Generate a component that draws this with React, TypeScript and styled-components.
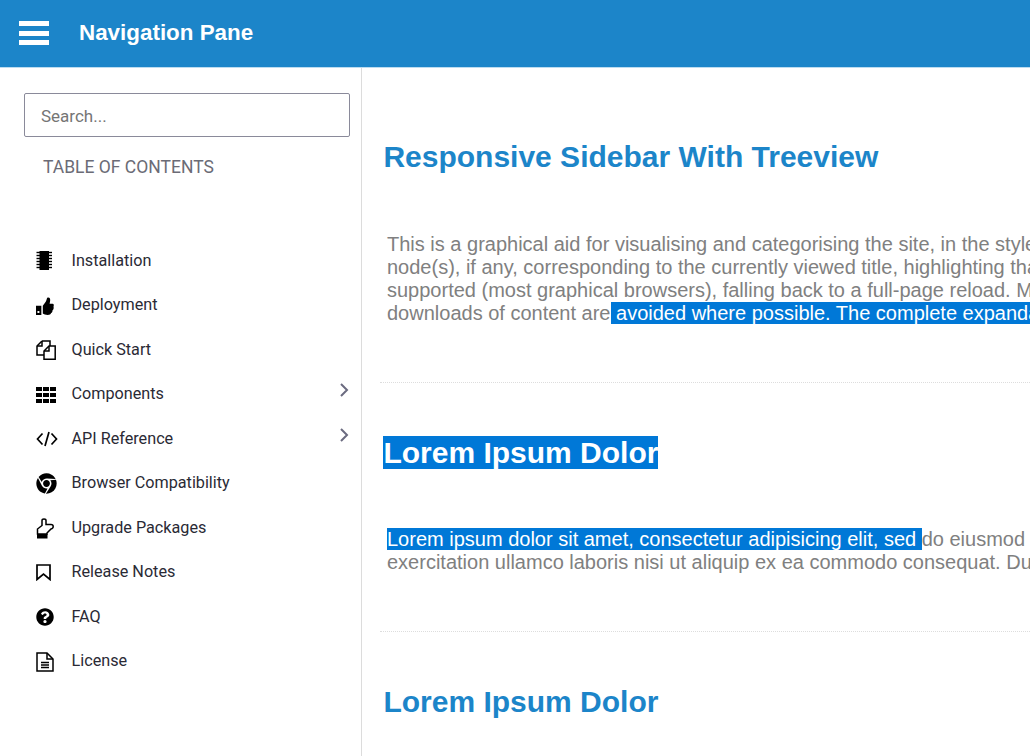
import React from "react";
import styled, { createGlobalStyle } from "styled-components";
import { FaChrome, FaQuestionCircle } from "react-icons/fa";

const Global = createGlobalStyle`
  html, body { margin: 0; padding: 0; background: #fff; overflow: hidden; height: 756px; }
  * { box-sizing: border-box; }
`;

const Page = styled.div`
  width: 1030px;
  height: 756px;
  display: flex;
  flex-direction: column;
  overflow: hidden;
`;

const TopBar = styled.header`
  height: 68px;
  flex: none;
  background: #1c85c9;
  border-bottom: 1px solid #bcdcf0;
  display: flex;
  align-items: center;
  padding-left: 19px;
  gap: 30px;
`;

const Burger = styled.div`
  width: 30px;
  height: 24px;
  display: flex;
  flex-direction: column;
  justify-content: space-between;
  margin-top: -1px;
`;

const BurgerLine = styled.span`
  display: block;
  height: 5px;
  background: #fff;
`;

const Brand = styled.div`
  font: bold 22.4px "Liberation Sans", Arial, sans-serif;
  color: #fff;
  margin-top: -1px;
`;

const Body = styled.div`
  flex: 1;
  display: flex;
  min-height: 0;
`;

const Sidebar = styled.aside`
  width: 362px;
  flex: none;
  border-right: 1px solid #dcdcdc;
  padding: 25px 11px 0 24px;
  font-family: Roboto, sans-serif;
`;

const Search = styled.input`
  display: block;
  width: 326px;
  height: 44px;
  border: 1px solid #8a8a9a;
  border-radius: 2px;
  padding: 1px 16px 0;
  font: 17px Roboto, sans-serif;
  outline: none;
  &::placeholder { color: #757575; opacity: 1; }
`;

const TocTitle = styled.div`
  margin: 20px 0 0 19px;
  font-size: 17.5px;
  line-height: 21px;
  color: #6b6b76;
`;

const Tree = styled.ul`
  list-style: none;
  margin: 60px 0 0;
  padding: 0;
`;

const TreeItem = styled.li`
  height: 44.5px;
  display: flex;
  align-items: center;
  color: #2a2a35;
  font-size: 16.2px;
`;

const IconSlot = styled.span`
  width: 47.5px;
  padding: 2px 0 0 12px;
  flex: none;
  display: flex;
  align-items: center;
  color: #000;
`;

const Label = styled.span`
  flex: 1;
`;

const Caret = styled.svg`
  display: block;
  width: 10px;
  height: 14px;
  margin: -7px 1px 0 0;
  fill: none;
  stroke: #6b6b80;
  stroke-width: 2;
`;

const Main = styled.main`
  flex: 1;
  min-width: 0;
  overflow: hidden;
  padding: 0 0 0 18px;
`;

const Section = styled.section<{ $top: number }>`
  padding-top: ${(p) => p.$top}px;
  border-bottom: 1px dotted #dddddd;
  &:last-child { border-bottom: 0; }
`;

const Heading = styled.h2`
  margin: 0 0 0 3.4px;
  font: bold 30px/34px "Liberation Sans", Arial, sans-serif;
  color: #1c85c9;
  white-space: nowrap;
`;

const Paragraph = styled.p<{ $top: number; $bottom: number }>`
  margin: 0;
  padding: ${(p) => `${p.$top}px 0 ${p.$bottom}px 7px`};
  font: 20px/23px "Liberation Sans", Arial, sans-serif;
  color: #808080;
  white-space: nowrap;
`;

const Selected = styled.span`
  background: #0078d7;
  color: #fff;
`;

function ChipIcon() {
  const ys = [1.5, 4.5, 7.5, 10.5, 13.5, 16.5];
  return (
    <svg width="16" height="19" viewBox="0 0 16 19" style={{ marginTop: -2 }}>
      <rect x="3.5" y="0" width="9.5" height="19" fill="#000" />
      {ys.map((y) => (
        <path key={y} d={`M0.5 ${y}H16`} stroke="#000" strokeWidth="1.4" />
      ))}
    </svg>
  );
}

function ThumbIcon() {
  return (
    <svg width="18" height="18" viewBox="0 0 18.5 18.5">
      <path fillRule="evenodd" d="M0 9h5.5v9.5H0zM1.5 14.5v2h2v-2z" fill="#000" />
      <path d="M7 9 L10 5 C11 3 11 1 12 0.5 C14 0 15 2 14.5 4 L14 7 H17 C18.5 7 18.5 9 18 10 C18.5 11.5 18 13 17 13.5 C17 15 16.5 16 15.5 16.5 C15 18 14 18.5 12 18.5 C10 18.5 8 17.5 7 17 Z" fill="#000" />
    </svg>
  );
}

function CopyIcon() {
  return (
    <svg width="20" height="20" viewBox="0 0 20 20" fill="none" stroke="#000" strokeWidth="1.5">
      <path d="M6 1H14V6M6 1 1 6V15H8" />
      <path d="M1 6H6V1" />
      <path d="M13 6H19.2V19.2H8V11Z" fill="#fff" />
      <path d="M13 6V11H8" />
    </svg>
  );
}

function GridIcon() {
  const xs = [0, 7, 14];
  const ys = [0, 6, 12];
  return (
    <svg width="20" height="16" viewBox="0 0 20 16">
      {ys.map((y) =>
        xs.map((x) => <rect key={`${x}-${y}`} x={x} y={y} width="6" height="4" fill="#000" />)
      )}
    </svg>
  );
}

function CodeIcon() {
  return (
    <svg width="22" height="20" viewBox="0 0 22 20" fill="none" stroke="#000" strokeWidth="1.7">
      <path d="M6.5 4.5 1.5 10l5 5.5M15.5 4.5l5 5.5-5 5.5M13 3 9 17" />
    </svg>
  );
}

function HandIcon() {
  return (
    <svg width="18" height="21" viewBox="0 0 18 21" fill="none" stroke="#000" strokeWidth="1.5">
      <path d="M1.5 16V11L6 7.5V2.5Q6 1 8 1Q10 1 10 2.5V6.5H15Q17.2 6.5 17.2 8.5Q17.2 10.5 15 11L11 15V16Z" />
      <rect x="1" y="16" width="10.5" height="4.5" fill="#000" stroke="none" />
    </svg>
  );
}

function BookmarkIcon() {
  return (
    <svg width="15" height="17" viewBox="0 0 15 17" fill="none" stroke="#000" strokeWidth="1.7">
      <path d="M1 1H14V15.5L7.5 10 1 15.5Z" />
    </svg>
  );
}

function FileIcon() {
  return (
    <svg width="18" height="20" viewBox="0 0 18 20" fill="none" stroke="#000" strokeWidth="1.5">
      <path d="M1 1H11L17 7V19H1Z" />
      <path d="M11 1V7H17" />
      <path d="M5 10.5H13M5 13H13M5 15.5H13" strokeWidth="1.3" />
    </svg>
  );
}

const items = [
  { label: "Installation", icon: <ChipIcon /> },
  { label: "Deployment", icon: <ThumbIcon /> },
  { label: "Quick Start", icon: <CopyIcon /> },
  { label: "Components", icon: <GridIcon />, more: true },
  { label: "API Reference", icon: <CodeIcon />, more: true },
  { label: "Browser Compatibility", icon: <FaChrome size={21} /> },
  { label: "Upgrade Packages", icon: <HandIcon /> },
  { label: "Release Notes", icon: <BookmarkIcon /> },
  { label: "FAQ", icon: <FaQuestionCircle size={18} /> },
  { label: "License", icon: <FileIcon /> },
];

export default function App() {
  return (
    <Page>
      <Global />
      <TopBar>
        <Burger>
          <BurgerLine />
          <BurgerLine />
          <BurgerLine />
        </Burger>
        <Brand>Navigation Pane</Brand>
      </TopBar>
      <Body>
        <Sidebar>
          <Search placeholder="Search..." />
          <TocTitle>TABLE OF CONTENTS</TocTitle>
          <Tree>
            {items.map((it) => (
              <TreeItem key={it.label}>
                <IconSlot>{it.icon}</IconSlot>
                <Label>{it.label}</Label>
                {it.more && (
                  <Caret viewBox="0 0 10 14">
                    <path d="M2 1l6 6-6 6" />
                  </Caret>
                )}
              </TreeItem>
            ))}
          </Tree>
        </Sidebar>
        <Main>
          <Section $top={72}>
            <Heading>Responsive Sidebar With Treeview</Heading>
            <Paragraph $top={59} $bottom={57}>
              This is a graphical aid for visualising and categorising the site, in the style of an expandable<br />
              node(s), if any, corresponding to the currently viewed title, highlighting that title as the current<br />
              supported (most graphical browsers), falling back to a full-page reload. Multiple simultaneous<br />
              downloads of content are<Selected> avoided where possible. The complete expandable tree view</Selected>
            </Paragraph>
          </Section>
          <Section $top={53}>
            <Heading><Selected>Lorem Ipsum Dolor</Selected></Heading>
            <Paragraph $top={58} $bottom={57}>
              <Selected>Lorem ipsum dolor sit amet, consectetur adipisicing elit, sed </Selected>do eiusmod tempor incididunt ut labore<br />
              exercitation ullamco laboris nisi ut aliquip ex ea commodo consequat. Duis aute irure dolor in
            </Paragraph>
          </Section>
          <Section $top={53}>
            <Heading>Lorem Ipsum Dolor</Heading>
          </Section>
        </Main>
      </Body>
    </Page>
  );
}
